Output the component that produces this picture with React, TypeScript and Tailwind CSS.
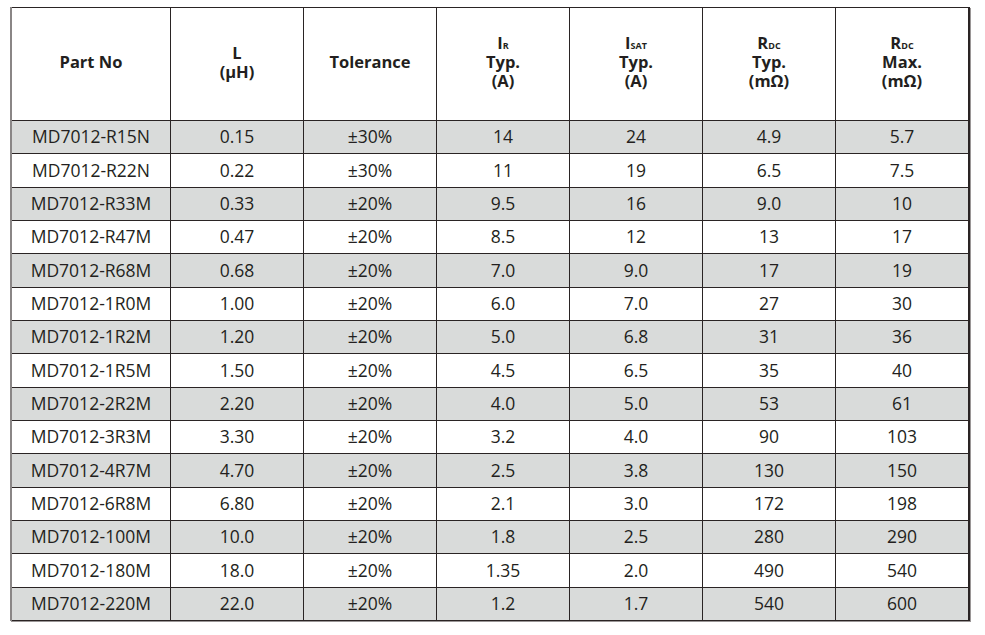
import React from "react";

const rows: string[][] = [
  ["MD7012-R15N", "0.15", "±30%", "14", "24", "4.9", "5.7"],
  ["MD7012-R22N", "0.22", "±30%", "11", "19", "6.5", "7.5"],
  ["MD7012-R33M", "0.33", "±20%", "9.5", "16", "9.0", "10"],
  ["MD7012-R47M", "0.47", "±20%", "8.5", "12", "13", "17"],
  ["MD7012-R68M", "0.68", "±20%", "7.0", "9.0", "17", "19"],
  ["MD7012-1R0M", "1.00", "±20%", "6.0", "7.0", "27", "30"],
  ["MD7012-1R2M", "1.20", "±20%", "5.0", "6.8", "31", "36"],
  ["MD7012-1R5M", "1.50", "±20%", "4.5", "6.5", "35", "40"],
  ["MD7012-2R2M", "2.20", "±20%", "4.0", "5.0", "53", "61"],
  ["MD7012-3R3M", "3.30", "±20%", "3.2", "4.0", "90", "103"],
  ["MD7012-4R7M", "4.70", "±20%", "2.5", "3.8", "130", "150"],
  ["MD7012-6R8M", "6.80", "±20%", "2.1", "3.0", "172", "198"],
  ["MD7012-100M", "10.0", "±20%", "1.8", "2.5", "280", "290"],
  ["MD7012-180M", "18.0", "±20%", "1.35", "2.0", "490", "540"],
  ["MD7012-220M", "22.0", "±20%", "1.2", "1.7", "540", "600"],
];

function Sym({ main, sub }: { main: string; sub: string }) {
  return (
    <span className="block h-[19px]">
      {main}
      <span className="text-[9px] leading-none">{sub}</span>
    </span>
  );
}

function Line({ children }: { children: React.ReactNode }) {
  return <span className="block h-[19px] leading-[19px]">{children}</span>;
}

export default function App() {
  const headers: React.ReactNode[] = [
    <Line>Part No</Line>,
    <>
      <Line>L</Line>
      <Line>(µH)</Line>
    </>,
    <Line>Tolerance</Line>,
    <>
      <Sym main="I" sub="R" />
      <Line>Typ.</Line>
      <Line>(A)</Line>
    </>,
    <>
      <Sym main="I" sub="SAT" />
      <Line>Typ.</Line>
      <Line>(A)</Line>
    </>,
    <>
      <Sym main="R" sub="DC" />
      <Line>Typ.</Line>
      <Line>(mΩ)</Line>
    </>,
    <>
      <Sym main="R" sub="DC" />
      <Line>Max.</Line>
      <Line>(mΩ)</Line>
    </>,
  ];

  return (
    <div
      className="w-[985px] h-[635px] bg-white pt-[7px] pl-[10px]"
      style={{ fontFamily: '"Open Sans", "Noto Sans", sans-serif' }}
    >
      <div className="w-[960px] bg-[#2a2424] border-l-2 border-l-[#8a8686] pt-px pr-px pb-px grid grid-cols-[158px_repeat(6,132px)] grid-rows-[112px_repeat(15,32.33px)] gap-px text-[#231f20] shadow-[1px_1px_0_#9a9696]">
        {headers.map((h, i) => (
          <div
            key={"h" + i}
            className="bg-white flex flex-col items-center justify-center pb-[5px] text-[16.5px] font-bold leading-[19px] text-center"
          >
            {h}
          </div>
        ))}
        {rows.map((r, ri) =>
          r.map((c, ci) => (
            <div
              key={ri + "-" + ci}
              className={
                (ri % 2 === 0 ? "bg-[#d9dbda]" : "bg-white") +
                " flex items-center justify-center text-[17.5px] leading-none"
              }
            >
              {c}
            </div>
          ))
        )}
      </div>
    </div>
  );
}
